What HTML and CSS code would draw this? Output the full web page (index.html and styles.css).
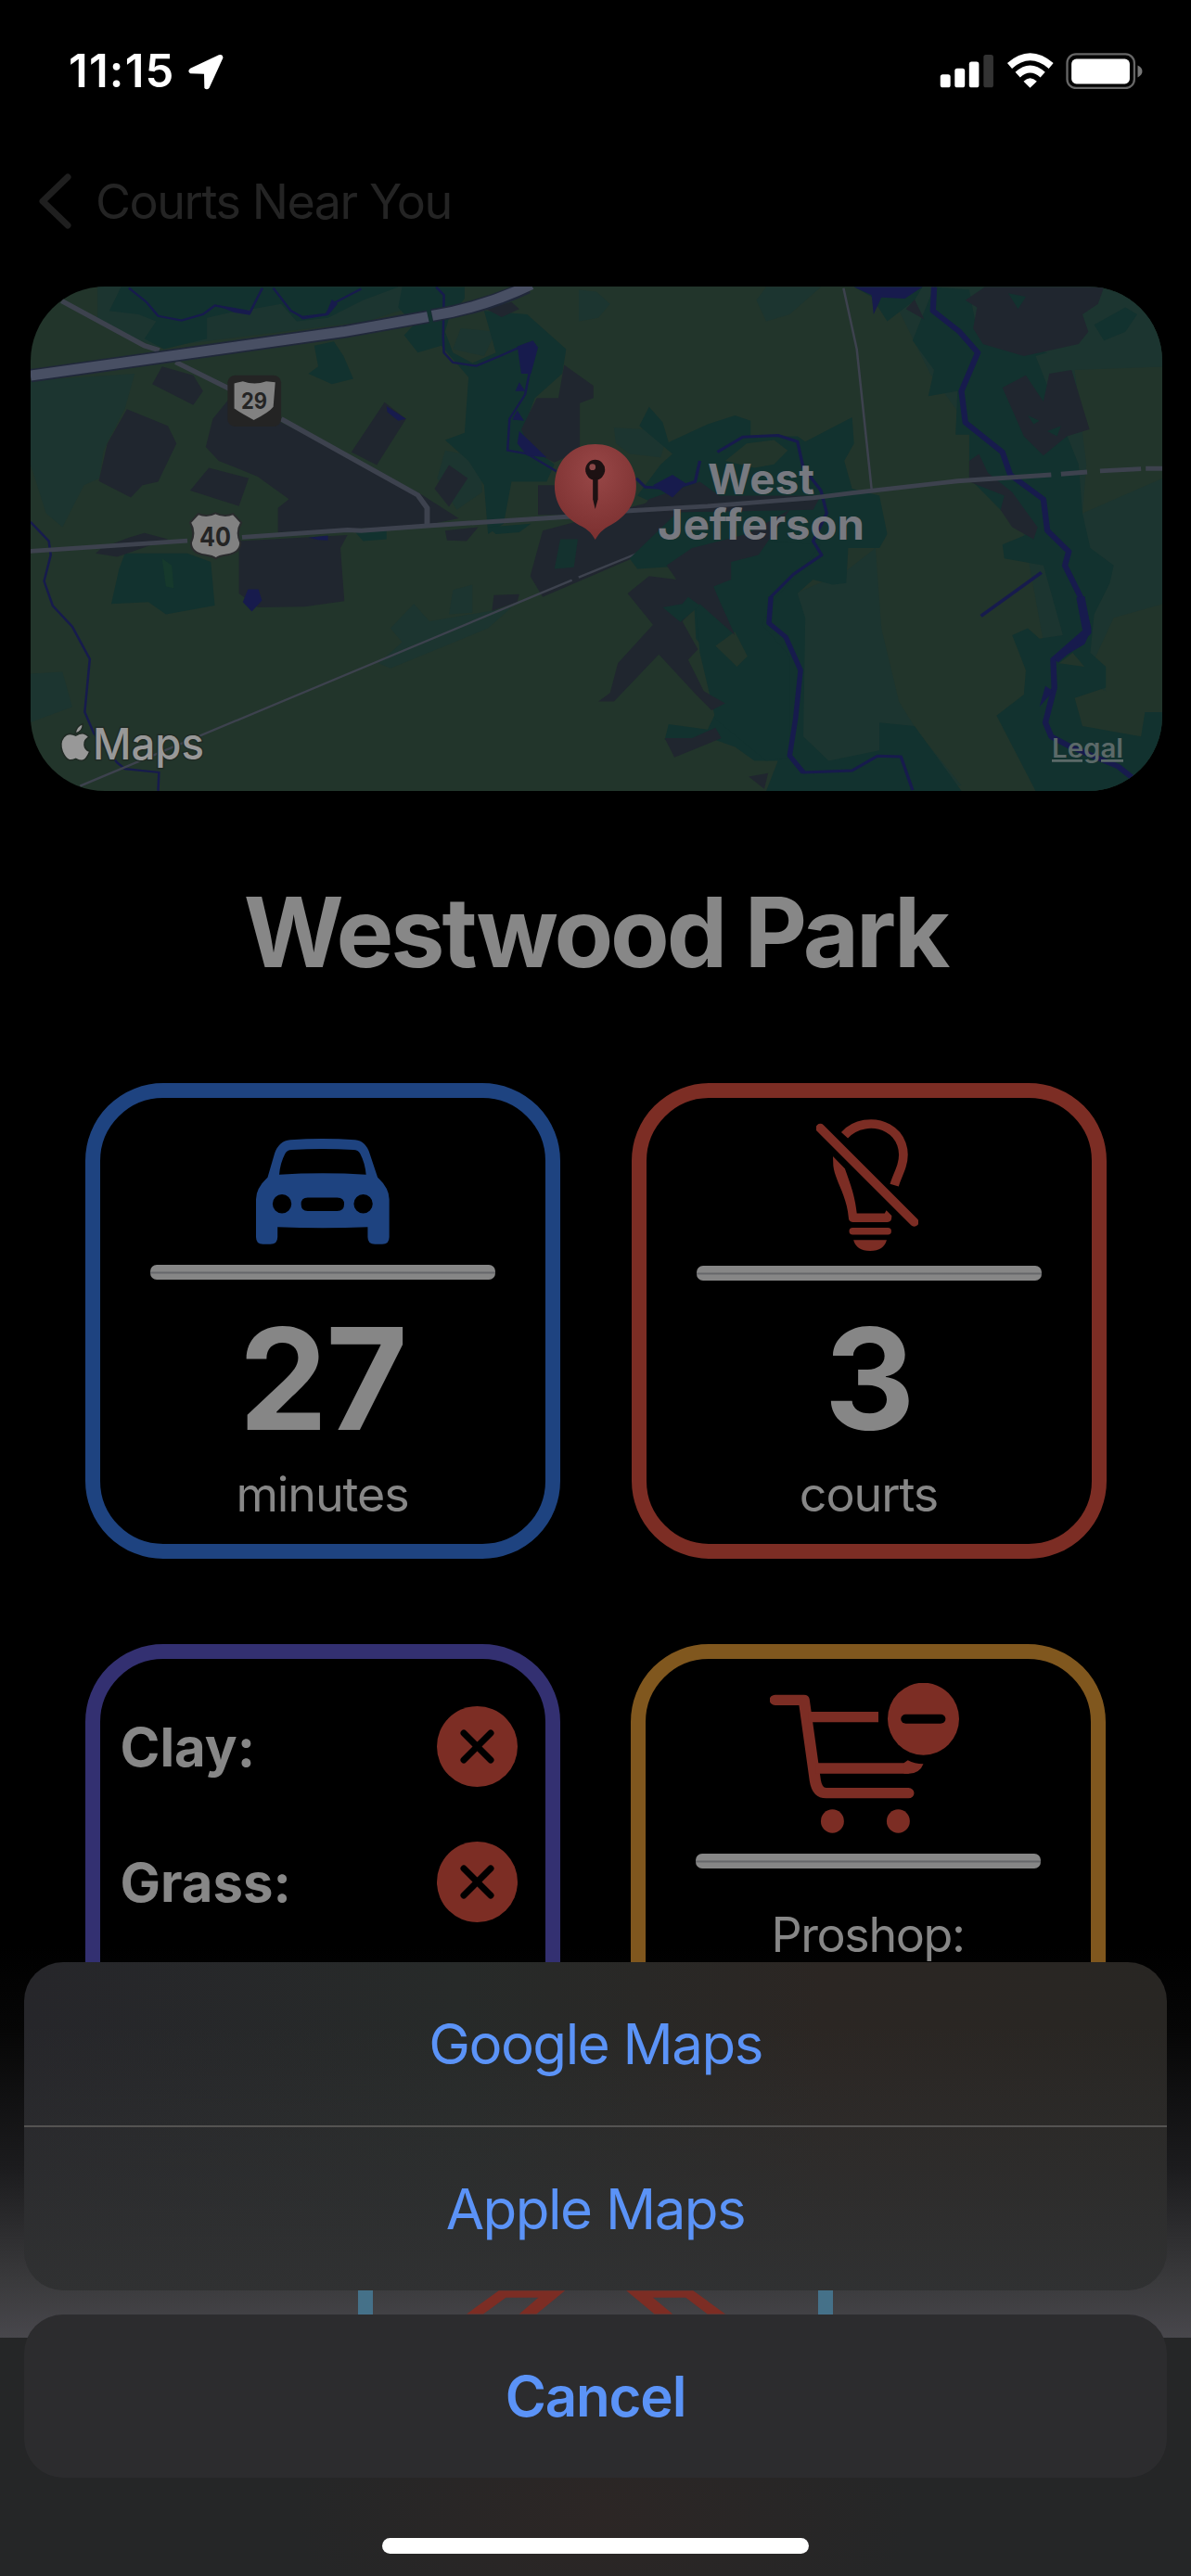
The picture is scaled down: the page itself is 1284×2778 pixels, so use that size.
FILE: index.html
```html
<!DOCTYPE html>
<html lang="en">
<head>
<meta charset="utf-8">
<title>Westwood Park</title>
<link rel="stylesheet" href="styles.css">
</head>
<body>
<div class="screen">
  <header class="status">
    <span class="time">11:15</span>
    <svg class="location" viewBox="427 53 117 118"><path d="M436 101 L529 57 Q541 52 543 66 L498 164 Q490 173 482 165 L481 119 L436 117 Q425 110 436 101Z" fill="#fff"/></svg>
    <div class="indicators">
      <svg class="signal" viewBox="36 54 176 112"><g fill="#fff"><rect x="37" y="121" width="33" height="43" rx="8"/><rect x="84" y="102" width="33" height="62" rx="8"/><rect x="131" y="80" width="32" height="84" rx="8"/></g><rect x="178" y="57" width="32" height="107" rx="8" fill="#333"/></svg>
      <svg class="wifi" viewBox="252 52 152 114"><g fill="none" stroke="#fff" stroke-width="23"><path d="M262 94 Q328 36 396 94"/><path d="M288 123 Q328 86 369 123"/></g><path d="M328 165 L307 144 Q328 123 350 144Z" fill="#fff"/></svg>
      <svg class="battery" viewBox="446 50 250 118"><rect x="450" y="54" width="219" height="111" rx="29" fill="none" stroke="#666" stroke-width="7"/><rect x="464" y="70" width="190" height="81" rx="16" fill="#fff"/><path d="M680 91 Q695 98 695 110 Q695 122 680 130Z" fill="#777"/></svg>
    </div>
  </header>

  <nav class="nav">
    <svg class="back" viewBox="0 0 36 60"><path d="M32 4 L5 30 L32 56" fill="none" stroke="#1f1f1f" stroke-width="7" stroke-linecap="round" stroke-linejoin="round"/></svg>
    <span class="back-label">Courts Near You</span>
  </nav>

  <main class="content">
    <section class="map">
      <svg viewBox="0 0 1220 544" width="1220" height="544">
        <defs>
          <radialGradient id="pin" cx="50%" cy="30%" r="70%"><stop offset="0" stop-color="#984747"/><stop offset="1" stop-color="#7b3030"/></radialGradient>
        </defs>
        <rect width="1220" height="544" fill="#22352b"/>
        <!-- western half -->
        <g transform="translate(-33 -19) scale(.42092 .37628)">
          <g fill="#1c3530">
            <path d="M78 320 L345 300 L320 400 L265 520 L255 600 L215 620 L160 740 L118 700 L78 560Z"/>
            <path d="M250 50 L1130 50 L1050 110 L940 150 L400 225 L250 150Z"/>
            <path d="M1180 170 L1270 180 L1240 250 L1160 230Z"/>
            <path d="M1000 1030 L1060 960 L1100 1010 L1310 970 L1250 1030 L1000 1145 L970 1130 L1030 1070Z"/>
            <path d="M1160 920 L1210 905 L1210 985 L1150 990Z"/>
            <path d="M78 1160 L160 1155 L185 1255 L78 1300Z"/>
            <path d="M1140 520 L1230 540 L1235 640 L1170 690 L1120 600Z"/>
          </g>
          <g fill="#12322f">
            <path d="M310 52 L280 120 L355 130 L400 150 L370 200 L420 230 L530 200 L530 140 L590 125 L670 110 L720 100 L760 150 L840 140 L930 90 L1020 52Z"/>
            <path d="M1030 52 L1190 52 L1190 85 L1150 140 L1140 180 L1160 240 L1210 270 L1270 240 L1240 120 L1350 130 L1450 230 L1440 300 L1370 370 L1340 460 L1350 500 L1420 560 L1400 610 L1310 610 L1290 730 L1250 760 L1240 620 L1200 550 L1140 490 L1190 470 L1200 310 L1130 220 L1070 240 L1035 190 L1060 160 L1020 110Z"/>
            <path d="M805 220 L855 208 L880 250 L905 315 L850 330 L790 300 L815 280Z"/>
            <path d="M320 815 L480 815 L540 840 L550 965 L425 990 L380 955 L285 960 L305 860Z"/>
            <path d="M910 755 L990 750 L990 775 L930 780Z"/>
            <path d="M1250 740 L1360 730 L1330 755 L1270 760Z"/>
          </g>
          <path d="M415 830 L440 850 L445 915 L425 910Z" fill="#16392c"/>
          <g fill="#20262f">
            <path d="M415 280 L495 305 L520 350 L495 390 L390 330Z"/>
            <path d="M325 402 L430 450 L452 500 L405 610 L365 620 L335 655 L253 608 L275 500Z"/>
            <path d="M585 375 L720 440 L1070 640 L1175 715 L1090 735 L712 755 L712 685 L740 660 L660 595 L560 550 L527 510 L545 430Z"/>
            <path d="M535 570 L637 600 L612 680 L487 635Z"/>
            <path d="M985 382 L1040 430 L965 562 L900 525Z"/>
            <path d="M1150 562 L1198 600 L1150 682 L1113 630Z"/>
            <path d="M612 780 L890 763 L872 800 L882 952 L780 968 L660 970 L612 930Z"/>
            <path d="M330 770 L370 757 L430 775 L300 825 L245 815 L260 800Z"/>
            <path d="M1140 750 L1225 740 L1195 780 L1145 778Z"/>
            <path d="M1265 935 L1330 932 L1325 955 L1260 980Z"/>
            <path d="M1245 115 L1310 95 L1330 115 L1285 138Z"/>
            <path d="M1445 275 L1520 335 L1520 370 L1485 385 L1485 520 L1420 555 L1360 520 L1335 460 L1375 370 L1430 370Z"/>
            <path d="M1378 620 L1482 620 L1482 705 L1378 705Z"/>
            <path d="M1390 750 L1760 640 L1960 690 L1860 800 L1640 820 L1390 940 L1358 880Z"/>
          </g>
          <path d="M1435 775 L1480 775 L1470 855 L1420 860Z" fill="#14322f"/>
          <g fill="none" stroke="#171b4d" stroke-width="6">
            <path d="M330 55 L375 95 L405 135 L465 148 L520 130 L550 105 L640 125 L672 55"/>
            <path d="M700 55 L745 120 L775 138 L835 130 L860 95 L925 57"/>
            <path d="M1117 52 L1137 75 L1135 195 L1137 240 L1160 268 L1220 278 L1280 250 L1350 215 L1370 220 L1345 360 L1305 430 L1300 520 L1350 530 L1425 580"/>
            <path d="M78 725 L125 780 L130 820 L113 895 L135 965 L185 1025 L230 1118 L217 1270 L240 1330 L300 1415 L320 1433 L407 1443 L405 1496"/>
          </g>
          <g fill="#171b4d">
            <path d="M550 102 L645 120 L665 80 L640 132 L600 125Z"/><path d="M745 118 L775 140 L835 128 L850 88 L865 100 L840 133 L775 145Z"/>
            <path d="M1325 222 L1365 205 L1378 225 L1360 300 L1335 300Z"/><path d="M1330 325 L1320 350 L1345 350Z M1325 405 L1342 435 L1312 432Z M1330 465 L1400 540 L1350 535 L1325 500Z"/>
            <path d="M990 393 L1040 430 L1020 435 L992 410Z"/><path d="M635 918 L662 918 L671 950 L645 982 L622 955Z"/><path d="M790 770 L840 764 L840 778 L815 777Z"/>
          </g>
          <g fill="none" stroke="#3d424e">
            <path d="M205 1482 L1465 892 M1482 884 L1640 812 Q1760 730 1820 685" stroke-width="6"/>
            <path d="M78 809 L480 779 M620 769 L890 748 L925 750 L1095 736 L1500 707" stroke-width="13"/>
            <path d="M158 92 L370 220 L408 233 M450 267 L590 345 M720 430 L1070 648 L1094 685 V732" stroke-width="14"/>
          </g>
          <g fill="none" stroke="#20283a" stroke-width="38"><path d="M78 306 L880 180 L1096 137 M1106 134 Q1240 110 1350 52"/></g>
          <g fill="none" stroke="#484f63" stroke-width="29"><path d="M78 306 L880 180 L1096 137 M1107 134 Q1240 110 1360 45"/></g>
          <rect x="583" y="305" width="137" height="147" rx="20" fill="#242424"/>
          <path d="M600 328 L622 322 Q652 334 682 322 L705 325 L700 395 Q690 410 650 433 Q615 412 600 400Z" fill="#818181"/>
          <path d="M508 702 Q530 713 552 700 Q575 713 597 702 L618 727 Q603 755 616 785 Q615 815 580 820 Q560 823 553 830 Q545 823 525 820 Q490 815 489 785 Q502 755 487 727Z" fill="#818181" stroke="#292b2d" stroke-width="5"/>
          <g fill="#989898" stroke="#202b25" stroke-width="4"><path d="M194 1337 C210 1327 221 1330 228 1342 C211 1352 213 1376 230 1383 C218 1415 208 1412 194 1404 C181 1411 171 1412 160 1385 C148 1350 168 1322 194 1337Z"/><path d="M193 1332 Q194 1311 212 1304 Q214 1324 193 1332Z"/></g>
        </g>
        <!-- eastern half -->
        <g transform="translate(591 -19) scale(.42092 .37628)">
          <g fill="#1c3530">
            <path d="M0 60 L45 65 L80 100 L50 140 L0 150Z"/><path d="M455 90 L480 52 L620 52 L540 130 L480 150Z"/>
            <path d="M90 455 L170 460 L220 500 L210 540 L130 530 L95 500Z"/>
            <path d="M555 930 L680 870 L760 800 L775 1030 L820 1240 L870 1330 L980 1480 L760 1496 L560 1440 L570 1100Z"/>
            <path d="M790 52 L1496 52 L1496 280 L1270 290 L1300 560 L1290 700 L1496 600 L1496 960 L1370 1000 L1320 1120 L1350 1210 L1200 1130 L1120 640 L900 300Z"/>
          </g>
          <g fill="#12322f">
            <path d="M180 395 L215 440 L230 497 L330 445 L400 420 L440 435 L440 480 L560 480 L580 495 L700 425 L705 500 L680 550 L700 630 L770 650 L790 760 L770 800 L690 800 L685 900 L650 905 L600 890 L560 930 L580 1000 L575 1340 L640 1410 L770 1380 L770 1300 L860 1310 L980 1496 L480 1496 L510 1410 L450 1410 L400 1370 L350 1350 L220 1350 L230 1305 L330 1320 L390 1180 L300 1060 L290 850 L150 860 L130 830 L250 700 L150 650 L210 560 L240 530 L155 450Z"/>
            <path d="M480 780 L620 790 L580 850 L490 960 L470 1020 L540 1110 L540 1400 L480 1410 L350 1290 L310 1100 L290 850Z"/>
            <path d="M855 205 L910 52 L1000 60 L1020 180 L1200 240 L1170 250 L1280 560 L1290 700 L1310 800 L1370 850 L1360 900 L1320 990 L1310 1100 L1350 1140 L1350 1200 L1270 1230 L1290 1310 L1440 1340 L1450 1270 L1494 1270 L1494 1496 L1170 1496 L1070 1280 L1140 1220 L1145 1150 L1110 1050 L1150 1030 L1180 1060 L1240 1050 L1190 850 L1090 830 L1085 790 L1150 760 L1080 690 L1000 600 L1000 475 L965 475 L970 350 L895 365 L910 290Z"/>
            <path d="M705 52 H880 L860 90 L790 150 L750 80Z"/><path d="M1320 160 L1400 110 L1430 130 L1400 180 L1345 205Z"/>
          </g>
          <path d="M375 550 L430 500 L500 490 L535 520 L500 560 L450 570Z M350 1080 L400 1040 L432 1110 L405 1140Z M1230 1130 L1265 1100 L1295 1140Z" fill="#22352b"/>
          <g fill="#20262f">
            <path d="M990 90 L1040 52 H1345 L1330 100 L1290 130 L1305 180 L1280 215 L1140 250 L1035 215 L1010 170 L1020 110Z"/>
            <path d="M1085 340 L1145 305 L1190 380 L1205 300 L1262 290 L1308 460 L1250 480 L1190 535 L1140 480Z"/>
            <path d="M1025 530 L1048 585 L1110 640 L1175 740 L1165 775 L1110 740 L1080 690 L1090 650 L1000 610 L1000 550Z"/>
            <path d="M838 115 L860 88 L885 145Z"/>
            <path d="M225 850 L290 800 L430 760 L540 690 L460 820 L390 840 L390 890 L345 910 L360 950 L400 1050 L310 960 L265 1010 L305 1090 L280 1120 L320 1210 L375 1245 L340 1265 L300 1220 L205 1105 L90 1240 L50 1240 L80 1215 L100 1130 L190 1020 L125 930 L180 880 L250 890Z"/>
            <path d="M220 1345 L290 1345 L350 1315 L365 1345 L245 1400Z"/><path d="M435 1455 L485 1445 L475 1490Z"/>
            <path d="M180 660 L310 610 L360 650 L620 650 L600 690 L150 700Z"/>
          </g>
          <path d="M215 970 L265 960 L280 940 L310 965 L260 1012Z M1100 70 L1145 80 L1125 115Z M1150 420 L1180 435 L1165 445Z M1200 465 L1235 450 L1225 480Z" fill="#12322f"/>
          <g fill="none" stroke="#171b4d" stroke-linejoin="round">
            <path d="M147 600 L170 625 L240 630 L298 610 L310 550 M355 525 L420 482 L510 477 L560 495 L575 570 L620 635 L635 700 L600 780 L622 820 L550 875 L492 940 L487 1015 L530 1055 L568 1150 L555 1290 L540 1395 L575 1443 L700 1438 L765 1396 L825 1398 L855 1494" stroke-width="8"/>
            <path d="M492 940 L487 1015 L530 1055 L568 1150 L555 1290 L540 1395 L575 1443" stroke-width="13"/>
            <path d="M910 52 L907 120 L975 180 L1022 240 L980 350 L990 440 L1085 525 L1105 590 L1190 660 L1200 750 L1255 810 L1245 850 L1285 940 L1305 1030 L1290 1070 L1215 1120 L1218 1200 L1195 1300 L1210 1340 L1260 1370 L1380 1425 L1420 1460" stroke-width="15"/>
            <path d="M1285 940 L1302 1040 L1220 1120" stroke-width="22"/>
            <path d="M1185 870 L1030 995" stroke-width="9"/>
          </g>
          <path d="M705 52 H880 L835 85 L775 82 L755 130 L750 75Z M190 620 L240 590 L275 615 L240 655Z M1195 1195 L1215 1210 L1180 1255Z" fill="#171b4d"/>
          <g fill="none" stroke="#3d424e">
            <path d="M678 55 L712 230 L750 632" stroke-width="6"/>
            <path d="M100 695 L330 680 L600 656 L700 642 L970 608 L1210 590 M1235 588 L1302 582 M1335 579 L1440 573 M1452 572 H1496" stroke-width="13"/>
          </g>
          <path d="M42 502 C105 502 147 555 147 622 C147 680 112 718 75 738 Q55 750 42 776 Q30 750 8 738 C-30 718 -62 680 -62 622 C-62 555 -20 502 42 502Z" fill="url(#pin)"/>
          <g fill="#1d1112"><ellipse cx="42" cy="576" rx="25" ry="29"/><path d="M36 600 H49 V660 L42 688 L36 660Z"/></g><ellipse cx="35" cy="568" rx="8" ry="9" fill="#8b4848"/>
        </g>
        <g class="map-text">
          <text class="town" x="730" y="224" textLength="115" lengthAdjust="spacingAndGlyphs">West</text>
          <text class="town" x="676" y="273" textLength="223" lengthAdjust="spacingAndGlyphs">Jefferson</text>
          <text class="maps" x="67" y="510" textLength="120" lengthAdjust="spacingAndGlyphs">Maps</text>
          <text class="legal" x="1101" y="508" textLength="77" lengthAdjust="spacingAndGlyphs">Legal</text>
          <text class="road29" x="227" y="132" textLength="28" lengthAdjust="spacingAndGlyphs">29</text>
          <text class="road40" x="182" y="280" textLength="34" lengthAdjust="spacingAndGlyphs">40</text>
        </g>
      </svg>
    </section>

    <h1 class="title">Westwood Park</h1>

    <div class="row row-first">
      <section class="card blue">
        <svg class="car" viewBox="549 218 403 318" fill="#1e4380"><path fill-rule="evenodd" d="M584 334 L605 262 Q618 224 652 221 Q750 214 848 221 Q880 224 892 262 L916 334 Q951 367 951 400 V514 Q951 536 930 536 H908 Q886 536 886 514 V484 Q750 490 614 484 V514 Q614 536 592 536 H570 Q549 536 549 514 V400 Q549 367 584 334Z M619 326 Q750 318 881 326 Q878 290 863 262 Q857 251 843 251 Q750 246 657 251 Q643 251 637 262 Q622 290 619 326Z M599 414 a28 28 0 1 0 57 0 a28 28 0 1 0 -57 0Z M844 414 a28 28 0 1 0 57 0 a28 28 0 1 0 -57 0Z M705 395 Q685 395 685 415 Q685 436 705 436 H794 Q815 436 815 415 Q815 395 794 395Z"/></svg>
        <div class="divider"></div>
        <div class="number">27</div>
        <div class="label minutes">minutes</div>
      </section>
      <section class="card red">
        <svg class="bulb" viewBox="614 160 307 397"><g fill="none" stroke="#7c2d24" stroke-width="27"><path d="M626 187 L909 470" stroke-linecap="round"/><path d="M699 208 C730 174 785 163 830 187 C870 209 885 255 871 300 C865 320 855 338 849 359"/></g><g fill="#7c2d24"><path d="M664 272 L700 309 C718 360 730 390 736 444 H820 L825 435 L841 451 Q842 470 828 470 H724 Q711 470 711 456 C706 390 670 345 665 300Z"/><rect x="713" y="487" width="127" height="21" rx="10.5"/><path d="M726 524 H826 Q818 556 776 557 Q734 556 726 524Z"/></g></svg>
        <div class="divider"></div>
        <div class="number">3</div>
        <div class="label courts">courts</div>
      </section>
    </div>

    <div class="row row-second">
      <section class="card purple">
        <div class="surface"><span class="clay">Clay:</span><svg class="cross" viewBox="0 0 87 87"><circle cx="43.5" cy="43.5" r="43.5" fill="#7c2d24"/><path d="M29 29 L58 58 M58 29 L29 58" stroke="#000" stroke-width="7" stroke-linecap="round"/></svg></div>
        <div class="surface"><span class="grass">Grass:</span><svg class="cross" viewBox="0 0 87 87"><circle cx="43.5" cy="43.5" r="43.5" fill="#7c2d24"/><path d="M29 29 L58 58 M58 29 L29 58" stroke="#000" stroke-width="7" stroke-linecap="round"/></svg></div>
      </section>
      <section class="card orange">
        <svg class="cart" viewBox="475 196 572 486" preserveAspectRatio="none"><g fill="none" stroke="#7c2d24" stroke-width="34" stroke-linejoin="round"><path d="M491 251 H578 L612 512 Q618 552 645 552 H894" stroke-linecap="round"/><path d="M590 306 H803 M615 472 H895"/></g><g fill="#7c2d24"><path d="M880 455 L892 446 Q912 458 939 458 Q928 489 895 489 H880Z"/><ellipse cx="939" cy="312" rx="108" ry="117"/><ellipse cx="664" cy="643" rx="35" ry="38"/><ellipse cx="863" cy="643" rx="35" ry="38"/></g><rect x="871" y="297" width="135" height="30" rx="15" fill="#000"/></svg>
        <div class="divider"></div>
        <div class="label proshop">Proshop:</div>
      </section>
    </div>

    <div class="row row-third">
      <section class="card cyan">
        <svg class="emblem" viewBox="370 32 836 80"><path fill="#7c2d24" fill-rule="evenodd" d="M370 108 L474 32 H688 L596 108 H540 L602 55 H497 L424 108Z M886 32 H1102 L1206 108 H1148 L1078 55 H972 L1036 108 H977Z"/></svg>
      </section>
    </div>
  </main>

  <div class="tabbar"></div>
  <div class="action-sheet">
    <div class="options">
      <button class="option google">Google Maps</button>
      <button class="option apple">Apple Maps</button>
    </div>
    <button class="option cancel">Cancel</button>
  </div>
  <div class="home-indicator"></div>
</div>
</body>
</html>
```
FILE: styles.css
```css
* { box-sizing: border-box; }
body { margin: 0; background: #000; }
.screen {
  position: relative;
  width: 1284px;
  height: 2778px;
  overflow: hidden;
  display: flex;
  flex-direction: column;
  background: linear-gradient(to bottom, #000 2100px, #060606 2190px, #1b1b1d 2335px, #3a3a3c 2460px, #48474c 2521px);
  color: #878787;
  font-family: Inter, "Liberation Sans", sans-serif;
}
svg { display: block; flex: none; }

.status {
  display: flex;
  align-items: flex-start;
  height: 186px;
  flex: none;
  padding: 48px 52px 0 74px;
}
.time { width: 115px; white-space: nowrap; font-size: 49px; letter-spacing: 1.2px; line-height: 58px; font-weight: 600; color: #fff; }
.location { width: 39px; height: 39px; margin: 10px 0 0 13px; }
.indicators { display: flex; margin: 9px 0 0 auto; gap: 13px; }
.signal { width: 59px; height: 37px; margin-top: 1px; }
.wifi { width: 51px; height: 38px; }
.battery { width: 83px; height: 39px; }

.nav { display: flex; flex: none; height: 123px; padding-left: 41px; }
.back { width: 36px; height: 60px; margin-top: 1px; }
.back-label { margin-left: 26px; font-size: 52px; letter-spacing: -1.45px; line-height: 63px; color: #242424; white-space: nowrap; }

.content { flex: none; }
.map { width: 1220px; height: 544px; margin-left: 33px; border-radius: 80px; overflow: hidden; }
.town { font-size: 45px; font-weight: 700; fill: #777980; }
.maps { font-size: 47px; font-weight: 500; fill: #989898; paint-order: stroke; stroke: #202b25; stroke-width: 3px; }
.legal { font-size: 28px; font-weight: 600; fill: #5b6968; text-decoration: underline; }
.road29 { font-size: 24px; font-weight: 700; fill: #242424; }
.road40 { font-size: 28px; font-weight: 700; fill: #242424; }

.title {
  margin: 89px 0 0;
  height: 226px;
  line-height: 126px;
  font-size: 104px;
  letter-spacing: -3.1px;
  font-weight: 700;
  text-align: center;
}

.row { display: flex; height: 513px; }
.row-first { padding-left: 91.5px; gap: 77px; }
.row-second { padding-left: 91.5px; gap: 76px; margin-top: 92px; }
.row-third { padding-left: 386px; margin-top: 92px; }
.card {
  display: flex;
  flex-direction: column;
  align-items: center;
  width: 512px;
  height: 513px;
  border: 16px solid;
  border-radius: 84px;
}
.blue { border-color: #1e4380; padding-top: 44px; }
.red { border-color: #7c2d24; padding-top: 23px; }
.purple { border-color: #333071; padding: 51px 30px 0 22px; gap: 59px; align-items: stretch; }
.orange { border-color: #80571e; padding-top: 26px; }
.cyan { border-color: #457189; padding-top: 76px; }

.car { width: 144px; height: 114px; margin-bottom: 22px; }
.bulb { width: 110px; height: 142px; margin: 0 4px 16px 0; }
.cart { width: 204px; height: 162px; margin: 0 7px 22px 0; }
.emblem { width: 279px; height: 27px; }
.divider {
  flex: none;
  width: 372px;
  height: 16px;
  border-radius: 7px;
  background: linear-gradient(#868686 0 7px, #66676a 8px 9px, #868686 10px);
}
.number { margin-top: 27px; font-size: 152px; letter-spacing: -2px; line-height: 160px; font-weight: 700; color: #868686; }
.red .number { margin-top: 26px; }
.label { margin-top: 15px; font-size: 52px; letter-spacing: -1.1px; line-height: 60px; }
.courts { margin-top: 15px; }
.proshop { margin-top: 42px; letter-spacing: -1.4px; }
.surface { display: flex; align-items: center; justify-content: space-between; height: 87px; font-size: 58px; font-weight: 700; }
.cross { width: 87px; height: 87px; }

.tabbar {
  position: absolute;
  left: 0;
  bottom: 0;
  width: 1284px;
  height: 257px;
  background: radial-gradient(ellipse 330px 200px at 650px 190px, #2c2625, #252627);
}
.action-sheet {
  position: absolute;
  left: 26px;
  top: 2116px;
  width: 1232px;
  display: flex;
  flex-direction: column;
  gap: 26px;
}
.options {
  display: flex;
  flex-direction: column;
  height: 354px;
  border-radius: 42px;
  overflow: hidden;
  background: linear-gradient(to bottom, rgba(48,49,50,0) 20%, #303132), linear-gradient(to right, #26262a, #272a29 38%, #2b2623 70%, #282623);
}
.option {
  flex: 1;
  border: 0;
  padding: 0;
  background: transparent;
  color: #5b93f7;
  font: 400 60px/176px Inter, "Liberation Sans", sans-serif;
  letter-spacing: -1.5px;
}
.apple { border-top: 2px solid #545352; }
.cancel { flex: none; height: 176px; border-radius: 42px; background: #2c2c2e; font-weight: 600; letter-spacing: -1.2px; }
.home-indicator { position: absolute; left: 412px; bottom: 24px; width: 460px; height: 17px; border-radius: 9px; background: #fff; }
```
